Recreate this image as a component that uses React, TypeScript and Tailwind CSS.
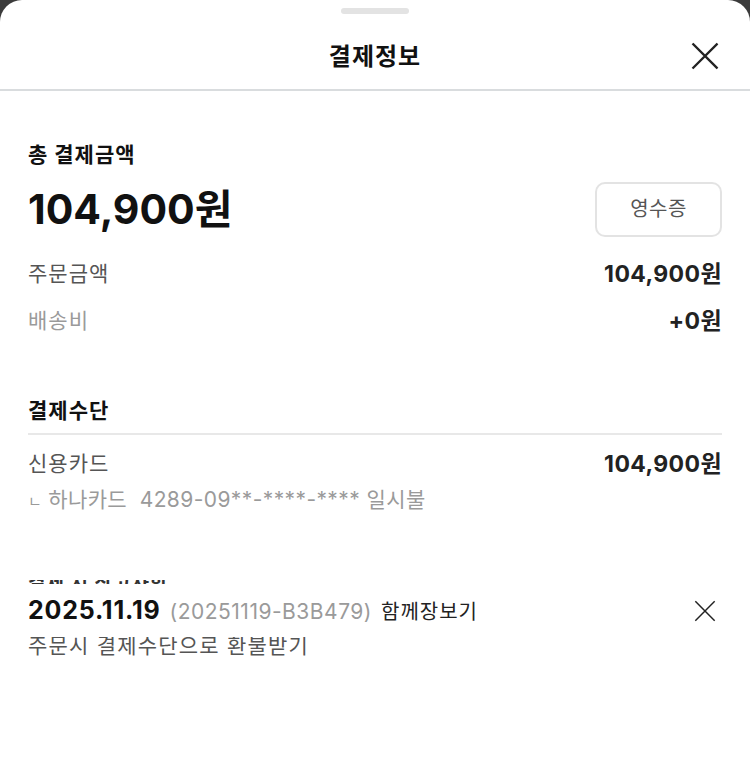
import React from "react"

function CloseIcon({ size, stroke }: { size: number; stroke: number }) {
  return (
    <svg width={size} height={size} viewBox="0 0 24 24" fill="none" stroke="#222" strokeWidth={stroke} strokeLinecap="square">
      <path d="M2 2 L22 22 M22 2 L2 22" />
    </svg>
  )
}

function Row({ label, value, muted }: { label: string; value: string; muted?: boolean }) {
  return (
    <div className="flex items-center justify-between h-[47px]">
      <span className={`text-[21px] tracking-[1px] leading-[30px] ${muted ? "text-[#9a9a9a]" : "text-[#555]"}`}>{label}</span>
      <span className="text-[23px] font-bold text-[#222] tracking-[0.4px] leading-[30px]">{value}</span>
    </div>
  )
}

export default function App() {
  return (
    <div
      className="h-[769px] w-[750px] bg-[#3b3b3b] overflow-hidden"
      style={{ fontFamily: '"Inter", "Noto Sans CJK KR", sans-serif' }}
    >
      <div className="h-full bg-white rounded-t-[22px] flex flex-col">
        <div className="flex justify-center pt-[8px]">
          <span className="w-[68px] h-[6px] rounded-full bg-[#e3e3e3]"></span>
        </div>

        <div className="relative h-[77px] flex items-center justify-center border-b-2 border-[#d9dcde] pt-[10px]">
          <span className="text-[24px] font-bold text-[#111] tracking-[1px]">결제정보</span>
          <span className="absolute right-[31px] top-[28px]">
            <CloseIcon size={28} stroke={2} />
          </span>
        </div>

        <div className="px-[28px]">
          <div className="pt-[49px] text-[21px] font-bold text-[#111] leading-[30px] tracking-[1px]">총 결제금액</div>
          <div className="flex items-center justify-between mt-[11px]">
            <span className="text-[41px] font-bold text-[#111] leading-[56px]">104,900원</span>
            <button className="w-[127px] h-[55px] rounded-[10px] border-2 border-[#e3e3e3] text-[20px] tracking-[0.5px] text-[#555]">
              영수증
            </button>
          </div>
          <div className="mt-[13px]">
            <Row label="주문금액" value="104,900원" />
            <Row label="배송비" value="+0원" muted />
          </div>

          <div className="mt-[52px] text-[21px] font-bold text-[#111] leading-[30px] tracking-[1px] pb-[7px] border-b-2 border-[#e8e8e8]">
            결제수단
          </div>
          <div className="flex items-center justify-between mt-[12px] h-[34px]">
            <span className="text-[21px] text-[#555] tracking-[1px]">신용카드</span>
            <span className="text-[23px] font-bold text-[#222] tracking-[0.4px]">104,900원</span>
          </div>
          <div className="mt-[2px] text-[21px] text-[#9a9a9a] leading-[34px] tracking-[0.4px] whitespace-nowrap">
            <span className="text-[15px] mr-[6px]">ㄴ</span>하나카드&nbsp; 4289-09**-****-**** 일시불
          </div>

          <div className="mt-[61px] h-[4px] overflow-hidden flex items-end">
            <span className="text-[19px] font-bold text-[#333] leading-[22px] whitespace-nowrap translate-y-[11px] tracking-[1px]">
              결제 시 참고사항
            </span>
          </div>

          <div className="flex items-center justify-between mt-[9px] h-[36px]">
            <div className="flex items-baseline gap-[9px]">
              <span className="text-[25px] font-bold text-[#111] tracking-[0.8px]">2025.11.19</span>
              <span className="text-[21px] text-[#9a9a9a] tracking-[0.5px]">(20251119-B3B479)</span>
              <span className="text-[20px] text-[#222] tracking-[1px]">함께장보기</span>
            </div>
            <span className="mr-[6px]">
              <CloseIcon size={22} stroke={1.6} />
            </span>
          </div>

          <div className="mt-[8px] h-[24px] overflow-hidden flex items-end">
            <span className="text-[21px] text-[#555] leading-[30px] whitespace-nowrap tracking-[1.2px]">주문시 결제수단으로 환불받기</span>
          </div>
        </div>
      </div>
    </div>
  )
}
